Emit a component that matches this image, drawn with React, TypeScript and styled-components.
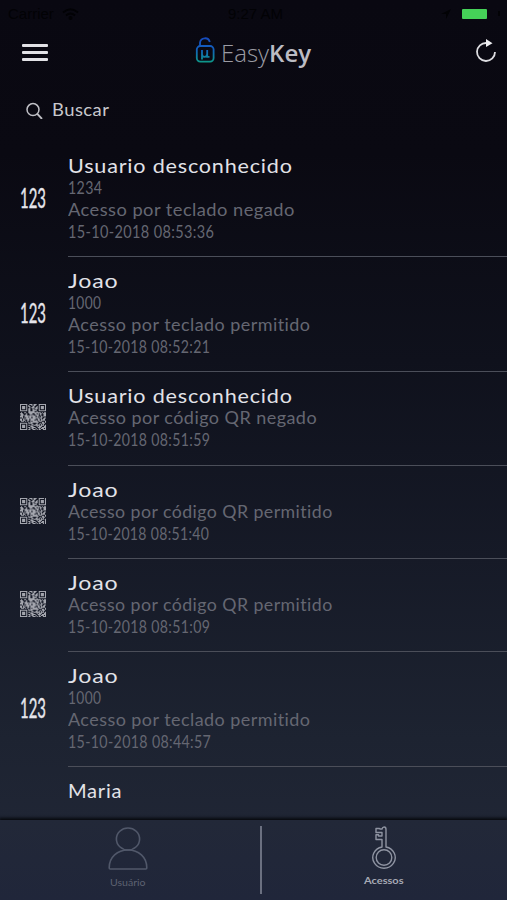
import React, { useLayoutEffect, useRef, useState } from "react";
import styled, { createGlobalStyle } from "styled-components";

const GlobalStyle = createGlobalStyle`
  * { box-sizing: border-box; }
  body { margin: 0; background: #090811; }
`;

const Screen = styled.div`
  width: 507px;
  height: 900px;
  overflow: hidden;
  display: flex;
  flex-direction: column;
  color: #e4e4e8;
  font-family: Lato, "Liberation Sans", sans-serif;
  font-variant-ligatures: none;
  background: linear-gradient(180deg, #090811 0%, #0a0912 17%, #0f111c 40%, #161a27 62%, #1d2331 82%, #222838 100%);
`;

const StatusBar = styled.div`
  height: 27px;
  flex: none;
  display: flex;
  align-items: center;
  justify-content: space-between;
  padding: 0 4px 0 8px;
  color: #020205;
  font: 15px/27px "Liberation Sans", sans-serif;
`;

const StatusGroup = styled.div<{ $end?: boolean }>`
  flex: 1;
  display: flex;
  align-items: center;
  gap: 8px;
  justify-content: ${(p) => (p.$end ? "flex-end" : "flex-start")};
`;

const BatteryTip = styled.span`
  width: 2px;
  height: 5px;
  background: #020205;
  margin: 0 3px 0 3px;
`;

const Battery = styled.div`
  width: 25px;
  height: 10px;
  border-radius: 1px;
  background: #45d158;
  margin-left: 3px;
`;

const Header = styled.header`
  height: 51px;
  flex: none;
  display: grid;
  grid-template-columns: 1fr auto 1fr;
  align-items: center;
  padding: 0 10px 0 22px;
`;

const MenuButton = styled.button`
  width: 26px;
  height: 17px;
  padding: 0;
  border: 0;
  background: none;
  display: flex;
  flex-direction: column;
  justify-content: space-between;
`;

const MenuLine = styled.span`
  height: 2.6px;
  border-radius: 1px;
  background: #e2e2e6;
`;

const Brand = styled.div`
  display: flex;
  align-items: center;
  gap: 6px;
  padding: 0 13px 6px 0;
`;

const BrandName = styled.div`
  height: 32px;
  padding-top: 3px;
  color: #9b9ba3;
  font: 300 24px/32px "Open Sans", sans-serif;
`;

const BrandStrong = styled.b`
  font-weight: 600;
  color: #bcbcc3;
`;

const RefreshButton = styled.button`
  justify-self: end;
  padding: 0 0 2px;
  border: 0;
  background: none;
  line-height: 0;
`;

const Search = styled.div`
  height: 63px;
  flex: none;
  display: flex;
  align-items: center;
  gap: 9px;
  padding: 0 0 0 25px;
`;

const SearchLabel = styled.div`
  color: #c8c8cd;
  font-size: 16.5px;
  line-height: 22px;
  letter-spacing: 0.4px;
`;

const List = styled.ul`
  flex: 1;
  min-height: 0;
  overflow: hidden;
  margin: 0;
  padding: 1px 0 0;
  list-style: none;
`;

const Row = styled.li<{ $height: number }>`
  display: flex;
  height: ${(p) => p.$height}px;
`;

const IconCell = styled.div`
  width: 68px;
  flex: none;
  display: flex;
  align-items: center;
  padding-left: 20px;
`;

const KeypadGlyph = styled.span`
  color: #e6e6ec;
  font-size: 27px;
  line-height: 26px;
  padding-bottom: 3px;
  -webkit-text-stroke: 0.4px #e6e6ec;
`;

const QrSlot = styled.span`
  line-height: 0;
  padding-bottom: 4px;
`;

const Details = styled.div`
  flex: 1;
  padding-top: 12px;
  border-bottom: 1px solid #4b4e59;
`;

const Name = styled.div`
  height: 22px;
  color: #e2e2e8;
  font-size: 19px;
  line-height: 24px;
  letter-spacing: 0.7px;
`;

const Info = styled.div`
  height: 22px;
  color: #656772;
  font-size: 16.3px;
  line-height: 23px;
  letter-spacing: 0.4px;
`;

const Measured = styled.span`
  display: inline-block;
  white-space: nowrap;
  transform-origin: 0 50%;
`;

const TabBar = styled.nav`
  position: relative;
  height: 80px;
  flex: none;
  display: grid;
  grid-template-columns: 260px 1fr;
  background: linear-gradient(180deg, #222838, #20263a);
  box-shadow: 0 -1px 3px 1px #06080d;
`;

const Tab = styled.div<{ $active?: boolean }>`
  display: flex;
  flex-direction: column;
  align-items: center;
  padding: ${(p) => (p.$active ? "6px 0 0 0" : "7px 4px 0 0")};
  gap: ${(p) => (p.$active ? 5 : 6)}px;
  color: ${(p) => (p.$active ? "#a7aab5" : "#5d6271")};
`;

const TabDivider = styled.span`
  width: 2px;
  height: 68px;
  background: #6b7080;
  position: absolute;
  left: 260px;
  top: 6px;
`;

const TabLabel = styled.div<{ $width: number; $active?: boolean }>`
  width: ${(p) => p.$width}px;
  font-size: 8.5px;
  line-height: 12px;
  font-weight: ${(p) => (p.$active ? 700 : 400)};
`;

/** Stretches a line of text to a given width, like an extended typeface. */
function Extended({ width, children }: { width: number; children: string }) {
  const ref = useRef<HTMLSpanElement>(null);
  const [scale, setScale] = useState(1);
  useLayoutEffect(() => {
    if (ref.current) setScale(width / ref.current.offsetWidth);
  }, [width, children]);
  return (
    <Measured ref={ref} style={{ transform: `scaleX(${scale})` }}>
      {children}
    </Measured>
  );
}

const LockLogo = () => (
  <svg width="20" height="27" viewBox="0 0 20 27" fill="none">
    <defs>
      <linearGradient id="lock" x1="0" y1="0" x2="0" y2="27" gradientUnits="userSpaceOnUse">
        <stop offset="0" stopColor="#1747bd" />
        <stop offset=".5" stopColor="#1261be" />
        <stop offset="1" stopColor="#0d9b85" />
      </linearGradient>
    </defs>
    <g stroke="url(#lock)" strokeWidth="1.8">
      <rect x="1.8" y="10" width="16.8" height="15.6" rx="3.5" />
      <path d="M5 10V6.7A5 5 0 0 1 14.8 6" />
      <path d="M7 14V23.5M7 14V18Q7 20.8 9.4 20.8Q12.2 20.8 12.2 18V14M12.2 18V20.8H14.5" />
    </g>
  </svg>
);

const RefreshIcon = () => (
  <svg width="22" height="25" viewBox="0 0 22 25" fill="none">
    <path d="M11.5 4A9 9 0 1 0 20 13" stroke="#dedee2" strokeWidth="1.8" />
    <path d="M11 0L17.5 4.2L11 8Z" fill="#eeeef1" />
  </svg>
);

const SearchIcon = () => (
  <svg width="18" height="18" viewBox="0 0 18 18" fill="none" stroke="#c0c0c6" strokeWidth="1.5">
    <circle cx="8" cy="8.6" r="6" />
    <path d="M12.3 12.9L17 17.9" strokeWidth="1.9" />
  </svg>
);

const SIZE = 25;

function moduleOn(x: number, y: number) {
  const corners = [[0, 0], [SIZE - 7, 0], [0, SIZE - 7]];
  for (const [cx, cy] of corners) {
    const dx = x - cx;
    const dy = y - cy;
    if (dx >= -1 && dx <= 7 && dy >= -1 && dy <= 7) {
      const ring = Math.max(Math.abs(dx - 3), Math.abs(dy - 3));
      return ring === 3 || ring <= 1;
    }
  }
  return ((x * 73 + y * 151 + x * y * 37 + ((x * x * 13) ^ (y * 29))) % 11) < 7;
}

const qrPath = Array.from({ length: SIZE * SIZE }, (_, i) => [i % SIZE, Math.floor(i / SIZE)])
  .filter(([x, y]) => moduleOn(x, y))
  .map(([x, y]) => `M${x} ${y}h1v1h-1z`)
  .join("");

const QrIcon = () => (
  <svg width="26" height="26" viewBox="0 0 25 25">
    <path d={qrPath} fill="#a4a6ae" />
  </svg>
);

const UserIcon = () => (
  <svg width="40" height="44" viewBox="0 0 40 44" fill="none" stroke="#51586a" strokeWidth="1.6">
    <ellipse cx="20" cy="12" rx="11.6" ry="11" />
    <path d="M1.2 41C1 30 9.5 23 20 23S39 30 38.8 41Q38.8 42 37.8 42H2.2Q1.2 42 1.2 41Z" />
  </svg>
);

const KeyIcon = () => (
  <svg width="26" height="44" viewBox="0 0 26 44" fill="none" stroke="#8f94a2" strokeWidth="1.4">
    <circle cx="13" cy="31.5" r="7.8" />
    <path d="M11 21V13.5H5V8.8H7.5V10H11V6.5H5V2.5H8.5L9 3H11Q11.5 1 13.2 1Q15 1 15 3.5V21A11.2 10.7 0 1 1 11 21Z" strokeLinejoin="round" />
  </svg>
);

const WifiIcon = () => (
  <svg width="17" height="12" viewBox="0 0 17 12" fill="none" stroke="#020205" strokeWidth="2">
    <path d="M1 4.5Q8.5-2 16 4.5M4 7.5Q8.5 3.5 13 7.5" />
    <circle cx="8.5" cy="10" r="1" />
  </svg>
);

const LocationIcon = () => (
  <svg width="10" height="10" viewBox="0 0 10 10">
    <path d="M0 5L10 0L5 10V5Z" fill="#020205" />
  </svg>
);

type Line = [text: string, width: number];
type Entry = { kind: "keypad" | "qr"; height: number; name: Line; lines: Line[] };

const entries: Entry[] = [
  {
    kind: "keypad", height: 115, name: ["Usuario desconhecido", 225],
    lines: [["1234", 34], ["Acesso por teclado negado", 227], ["15-10-2018 08:53:36", 146]],
  },
  {
    kind: "keypad", height: 115, name: ["Joao", 50],
    lines: [["1000", 33], ["Acesso por teclado permitido", 243], ["15-10-2018 08:52:21", 142]],
  },
  {
    kind: "qr", height: 94, name: ["Usuario desconhecido", 225],
    lines: [["Acesso por código QR negado", 249], ["15-10-2018 08:51:59", 142]],
  },
  {
    kind: "qr", height: 93, name: ["Joao", 50],
    lines: [["Acesso por código QR permitido", 265], ["15-10-2018 08:51:40", 141]],
  },
  {
    kind: "qr", height: 93, name: ["Joao", 50],
    lines: [["Acesso por código QR permitido", 265], ["15-10-2018 08:51:09", 142]],
  },
  {
    kind: "keypad", height: 115, name: ["Joao", 50],
    lines: [["1000", 33], ["Acesso por teclado permitido", 243], ["15-10-2018 08:44:57", 143]],
  },
];

function AccessRow({ entry }: { entry: Entry }) {
  return (
    <Row $height={entry.height}>
      <IconCell>
        {entry.kind === "keypad" ? (
          <KeypadGlyph><Extended width={26}>123</Extended></KeypadGlyph>
        ) : (
          <QrSlot><QrIcon /></QrSlot>
        )}
      </IconCell>
      <Details>
        <Name><Extended width={entry.name[1]}>{entry.name[0]}</Extended></Name>
        {entry.lines.map(([text, width]) => (
          <Info key={text}><Extended width={width}>{text}</Extended></Info>
        ))}
      </Details>
    </Row>
  );
}

export default function App() {
  return (
    <Screen>
      <GlobalStyle />
      <StatusBar>
        <StatusGroup>Carrier <WifiIcon /></StatusGroup>
        <span>9:27 AM</span>
        <StatusGroup $end><LocationIcon /><Battery /><BatteryTip /></StatusGroup>
      </StatusBar>
      <Header>
        <MenuButton aria-label="Menu"><MenuLine /><MenuLine /><MenuLine /></MenuButton>
        <Brand>
          <LockLogo />
          <BrandName>Easy<BrandStrong>Key</BrandStrong></BrandName>
        </Brand>
        <RefreshButton aria-label="Atualizar"><RefreshIcon /></RefreshButton>
      </Header>
      <Search>
        <SearchIcon />
        <SearchLabel><Extended width={57}>Buscar</Extended></SearchLabel>
      </Search>
      <List>
        {entries.map((entry, i) => <AccessRow key={i} entry={entry} />)}
        <Row $height={115}>
          <IconCell />
          <Details><Name><Extended width={54}>Maria</Extended></Name></Details>
        </Row>
      </List>
      <TabBar>
        <Tab>
          <UserIcon />
          <TabLabel $width={36}><Extended width={36}>Usuário</Extended></TabLabel>
        </Tab>
        <Tab $active>
          <KeyIcon />
          <TabLabel $active $width={39}><Extended width={39}>Acessos</Extended></TabLabel>
        </Tab>
        <TabDivider />
      </TabBar>
    </Screen>
  );
}
